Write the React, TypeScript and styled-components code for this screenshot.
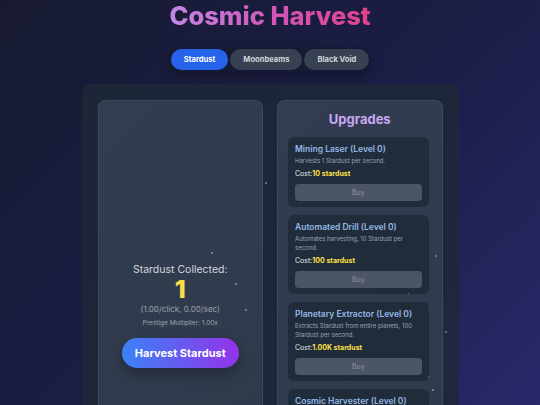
import React from "react";
import styled, { createGlobalStyle } from "styled-components";

const GlobalStyle = createGlobalStyle`
  html, body {
    margin: 0;
    padding: 0;
  }
  body {
    min-height: 100vh;
    background: linear-gradient(135deg, #171a31 0%, #1b1d45 45%, #2f2b76 100%);
    font-family: Inter, "Noto Sans", sans-serif;
    color: #e5e7eb;
    overflow: hidden;
  }
`;

const Page = styled.div`
  position: relative;
  min-height: 100vh;
  display: flex;
  flex-direction: column;
  align-items: center;
  padding-top: 1px;
  box-sizing: border-box;
`;

const Title = styled.h1`
  margin: 0;
  font-size: 25.5px;
  line-height: 30px;
  font-weight: 800;
  background: linear-gradient(90deg, #c387e6 0%, #d155b4 55%, #e0428a 100%);
  -webkit-background-clip: text;
  background-clip: text;
  color: transparent;
`;

const TabBar = styled.div`
  margin-top: 16px;
  display: flex;
  gap: 2px;
  padding: 2px;
  border-radius: 999px;
  background: rgba(17, 24, 39, 0.45);
  box-shadow: 0 4px 10px rgba(0, 0, 0, 0.25);
`;

const Tab = styled.button<{ $active?: boolean }>`
  height: 21px;
  padding: 0 13px;
  border: none;
  border-radius: 999px;
  font-family: Inter, sans-serif;
  font-size: 7.6px;
  font-weight: 700;
  background: ${(p) => (p.$active ? "#2563eb" : "#374151")};
  color: ${(p) => (p.$active ? "#ffffff" : "#d1d5db")};
`;

const Board = styled.main`
  margin-top: 12px;
  width: 377px;
  box-sizing: border-box;
  padding: 16px;
  border-radius: 10px;
  background: rgba(31, 41, 55, 0.78);
  display: grid;
  grid-template-columns: 1fr 1fr;
  gap: 14px;
`;

const Panel = styled.section`
  height: 431px;
  box-sizing: border-box;
  border-radius: 8px;
  background: linear-gradient(135deg, #333c51 0%, #2e3a4a 100%);
  border: 1px solid rgba(107, 114, 128, 0.25);
`;

const HarvestPanel = styled(Panel)`
  display: flex;
  flex-direction: column;
  align-items: center;
  justify-content: center;
  text-align: center;
`;

const CountLabel = styled.div`
  font-size: 10.5px;
  line-height: 13px;
  color: #d1d5db;
`;

const Count = styled.div`
  font-size: 25px;
  line-height: 26px;
  font-weight: 800;
  color: #fde047;
`;

const Rate = styled.div`
  margin-top: 2px;
  font-size: 8px;
  line-height: 11px;
  color: #9ca3af;
`;

const Multiplier = styled.div`
  margin-top: 4px;
  font-size: 6.5px;
  line-height: 9px;
  color: #9ca3af;
`;

const HarvestButton = styled.button`
  margin-top: 10px;
  width: 117px;
  height: 30px;
  border: none;
  border-radius: 999px;
  background: linear-gradient(90deg, #3b82f6 0%, #9333ea 100%);
  color: #ffffff;
  font-family: Inter, sans-serif;
  font-size: 11px;
  font-weight: 700;
  box-shadow: 0 6px 14px rgba(0, 0, 0, 0.3);
`;

const UpgradePanel = styled(Panel)`
  padding: 10px;
  overflow: hidden;
`;

const UpgradeHeading = styled.h2`
  margin: 0 0 10px;
  text-align: center;
  font-size: 13px;
  line-height: 16px;
  font-weight: 700;
  color: #c6a8f4;
`;

const UpgradeList = styled.div`
  display: flex;
  flex-direction: column;
  gap: 8px;
  padding-right: 3px;
`;

const Card = styled.article`
  padding: 7px 7px 6px;
  border-radius: 6px;
  background: rgba(31, 41, 55, 0.82);
`;

const CardTitle = styled.h3`
  margin: 0;
  font-size: 8.5px;
  line-height: 11px;
  font-weight: 600;
  color: #93b8e6;
`;

const CardText = styled.p`
  margin: 1px 0 0;
  font-size: 6px;
  line-height: 9px;
  color: #9ca3af;
`;

const Cost = styled.div`
  margin-top: 4px;
  font-size: 7px;
  line-height: 10px;
  color: #e5e7eb;
`;

const CostValue = styled.span`
  font-weight: 700;
  color: #fde047;
`;

const BuyButton = styled.button`
  display: block;
  margin-top: 5px;
  width: 100%;
  height: 17px;
  border: none;
  border-radius: 4px;
  background: #4b5563;
  color: #8f96a3;
  font-family: Inter, sans-serif;
  font-size: 7px;
`;

const StarLayer = styled.div`
  position: absolute;
  inset: 0;
  pointer-events: none;
`;

const Star = styled.span<{ $size?: number }>`
  position: absolute;
  width: ${(p) => p.$size ?? 1.5}px;
  height: ${(p) => p.$size ?? 1.5}px;
  border-radius: 50%;
  background: rgba(200, 205, 215, 0.55);
`;

const upgrades = [
  {
    name: "Mining Laser",
    text: "Harvests 1 Stardust per second.",
    cost: "10 stardust",
  },
  {
    name: "Automated Drill",
    text: "Automates harvesting, 10 Stardust per second.",
    cost: "100 stardust",
  },
  {
    name: "Planetary Extractor",
    text: "Extracts Stardust from entire planets, 100 Stardust per second.",
    cost: "1.00K stardust",
  },
  {
    name: "Cosmic Harvester",
    text: "Harvests whole nebulae, 1,000 Stardust per second.",
    cost: "10.00K stardust",
  },
];

const stars: [number, number, number][] = [
  [265, 182, 2],
  [211, 252, 1.5],
  [235, 283, 1.5],
  [245, 309, 1.5],
  [435, 255, 2],
  [445, 331, 2],
  [432, 389, 1.5],
  [408, 293, 1],
  [428, 376, 1],
];

export default function App() {
  return (
    <>
      <GlobalStyle />
      <Page>
        <Title>Cosmic Harvest</Title>
        <TabBar>
          <Tab $active>Stardust</Tab>
          <Tab>Moonbeams</Tab>
          <Tab>Black Void</Tab>
        </TabBar>
        <Board>
          <HarvestPanel>
            <CountLabel>Stardust Collected:</CountLabel>
            <Count>1</Count>
            <Rate>(1.00/click, 0.00/sec)</Rate>
            <Multiplier>Prestige Multiplier: 1.00x</Multiplier>
            <HarvestButton>Harvest Stardust</HarvestButton>
          </HarvestPanel>
          <UpgradePanel>
            <UpgradeHeading>Upgrades</UpgradeHeading>
            <UpgradeList>
              {upgrades.map((u) => (
                <Card key={u.name}>
                  <CardTitle>{u.name} (Level 0)</CardTitle>
                  <CardText>{u.text}</CardText>
                  <Cost>
                    Cost:<CostValue>{u.cost}</CostValue>
                  </Cost>
                  <BuyButton disabled>Buy</BuyButton>
                </Card>
              ))}
            </UpgradeList>
          </UpgradePanel>
        </Board>
        <StarLayer>
          {stars.map(([x, y, s], i) => (
            <Star key={i} $size={s} style={{ left: x, top: y }} />
          ))}
        </StarLayer>
      </Page>
    </>
  );
}
